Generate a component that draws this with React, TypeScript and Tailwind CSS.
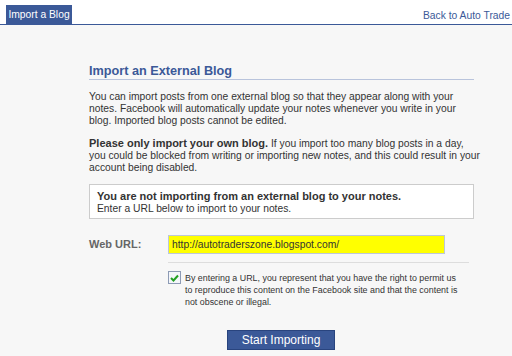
import React from 'react';

// Facebook-era "Import a Blog" notes page
const Line: React.FC<{ children: React.ReactNode }> = ({ children }) => (
    <span className="block whitespace-nowrap">{children}</span>
);

export default function App() {
    return (
        <div className="w-[512px] h-[356px] overflow-hidden bg-[#f7f7f7] font-['Liberation_Sans',Arial,sans-serif] text-[#333]">
            {/* Tab bar */}
            <div className="h-[25px] bg-white border-b border-[#3b5998] flex items-end justify-between">
                <div className="ml-[6px] h-[19px] w-[66px] bg-[#3b5998] text-white text-[10.3px] leading-[19px] text-center whitespace-nowrap">
                    Import a Blog
                </div>
                <div className="self-start mt-[9px] pr-[2px] text-[10.3px] leading-[13px] text-[#3b5998] whitespace-nowrap">
                    Back to Auto Trade
                </div>
            </div>

            <div className="pl-[89px] pt-[38px] w-[474px]">
                <h2 className="text-[12.7px] leading-[16px] font-bold text-[#3b5998] border-b border-[#b9c4dc] w-[385px]">
                    Import an External Blog
                </h2>

                <div className="mt-[11px] text-[10.3px] leading-[12px]">
                    <Line>You can import posts from one external blog so that they appear along with your</Line>
                    <Line>notes. Facebook will automatically update your notes whenever you write in your</Line>
                    <Line>blog. Imported blog posts cannot be edited.</Line>
                </div>

                <div className="mt-[10px] text-[10.3px] leading-[12px]">
                    <Line><b className="text-[11px]">Please only import your own blog.</b> If you import too many blog posts in a day,</Line>
                    <Line>you could be blocked from writing or importing new notes, and this could result in your</Line>
                    <Line>account being disabled.</Line>
                </div>

                <div className="mt-[10px] w-[385px] bg-white border border-[#ccc] pl-[7px] pt-[5px] pb-[3px] text-[10.3px] leading-[12px]">
                    <Line><b className="text-[11px]">You are not importing from an external blog to your notes.</b></Line>
                    <Line>Enter a URL below to import to your notes.</Line>
                </div>

                <div className="mt-[16px] flex items-center">
                    <div className="w-[79px] pr-[30px] text-right text-[11px] font-bold text-[#666] whitespace-nowrap">Web URL:</div>
                    <div className="w-[277px] h-[19px] bg-[#ffff00] border border-[#bdc7d8] pl-[3px] text-[10.3px] leading-[17px] whitespace-nowrap">
                        http://autotraderszone.blogspot.com/
                    </div>
                </div>

                <div className="ml-[79px] mt-[8px] w-[301px] h-px bg-[#dddddd]" />

                <div className="ml-[79px] mt-[9px] flex items-start gap-[4px]">
                    <div className="mt-[-1px] w-[13px] h-[13px] border border-[#8d9bb5] bg-[#f4f6fa] flex items-center justify-center shrink-0">
                        <svg width="9" height="8" viewBox="0 0 9 8">
                            <path d="M1 4 L3.5 6.5 L8 1.5" fill="none" stroke="#22a022" strokeWidth="2" />
                        </svg>
                    </div>
                    <div className="text-[8.9px] leading-[12px]">
                        <Line>By entering a URL, you represent that you have the right to permit us</Line>
                        <Line>to reproduce this content on the Facebook site and that the content is</Line>
                        <Line>not obscene or illegal.</Line>
                    </div>
                </div>

                <div className="ml-[138px] mt-[22px] w-[108px] h-[20px] bg-[#3b5998] border border-[#29447e] text-white text-[12px] leading-[18px] text-center">
                    Start Importing
                </div>
            </div>
        </div>
    );
}
